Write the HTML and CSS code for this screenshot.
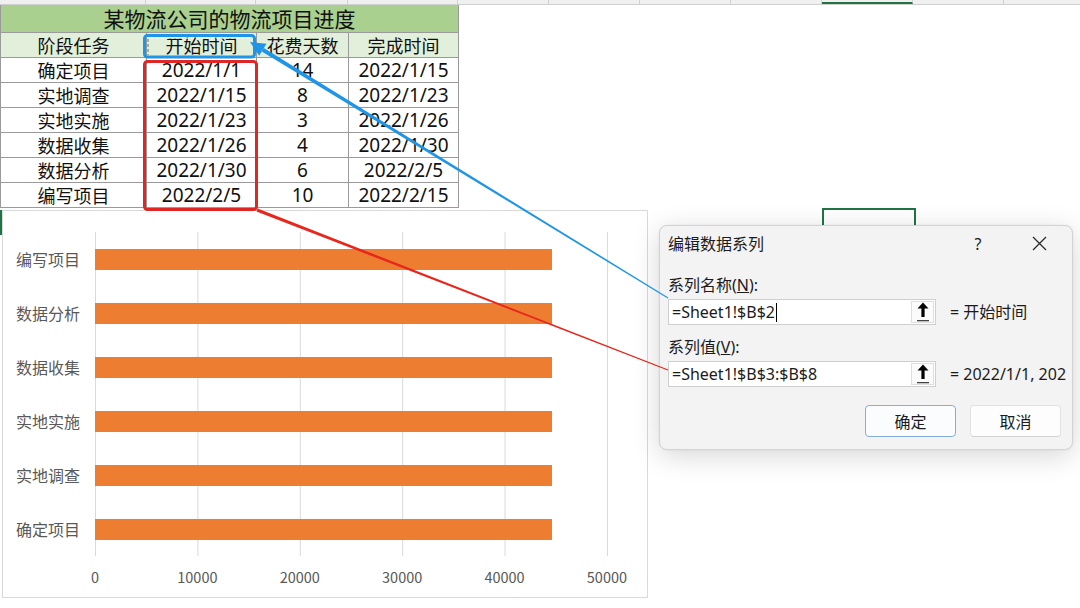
FILE: index.html
```html
<!DOCTYPE html>
<html lang="zh-CN">
<head>
<meta charset="utf-8">
<title>某物流公司的物流项目进度</title>
<link rel="stylesheet" href="styles.css">
</head>
<body>
<div class="sheet">
  <div class="colstrip">
    <span class="c1"></span><span class="c2"></span><span class="c3"></span><span class="c4"></span>
    <span class="cx"></span><span class="cx"></span><span class="cx"></span><span class="cx"></span>
    <span class="cx active"></span><span class="cx"></span><span class="cx last"></span>
  </div>

  <div class="data">
    <div class="title">某物流公司的物流项目进度</div>
    <div class="head">阶段任务</div><div class="head">开始时间</div><div class="head">花费天数</div><div class="head">完成时间</div>
    <div>确定项目</div><div class="num">2022/1/1</div><div class="num">14</div><div class="num">2022/1/15</div>
    <div>实地调查</div><div class="num">2022/1/15</div><div class="num">8</div><div class="num">2022/1/23</div>
    <div>实地实施</div><div class="num">2022/1/23</div><div class="num">3</div><div class="num">2022/1/26</div>
    <div>数据收集</div><div class="num">2022/1/26</div><div class="num">4</div><div class="num">2022/1/30</div>
    <div>数据分析</div><div class="num">2022/1/30</div><div class="num">6</div><div class="num">2022/2/5</div>
    <div>编写项目</div><div class="num">2022/2/5</div><div class="num">10</div><div class="num">2022/2/15</div>
  </div>

  <div class="chart">
    <div class="chart-body">
      <ul class="cats">
        <li>编写项目</li><li>数据分析</li><li>数据收集</li><li>实地实施</li><li>实地调查</li><li>确定项目</li>
      </ul>
      <div class="plot">
        <div class="row"><div class="bar" style="width:89.05%"></div></div>
        <div class="row"><div class="bar" style="width:89.05%"></div></div>
        <div class="row"><div class="bar" style="width:89.05%"></div></div>
        <div class="row"><div class="bar" style="width:89.05%"></div></div>
        <div class="row"><div class="bar" style="width:89.05%"></div></div>
        <div class="row"><div class="bar" style="width:89.05%"></div></div>
      </div>
    </div>
    <div class="axis">
      <span>0</span><span>10000</span><span>20000</span><span>30000</span><span>40000</span><span>50000</span>
    </div>
  </div>
</div>

<!-- selected cells behind the dialog -->
<div class="cell-sel"></div>
<div class="edge-sel"></div>

<div class="dialog">
  <div class="dlg-title">
    <span class="dlg-name">编辑数据系列</span>
    <span class="dlg-help">?</span>
    <span class="dlg-close">
      <svg width="15" height="15" viewBox="0 0 15 15"><path d="M1 1 L14 14 M14 1 L1 14" stroke="#2b2b2b" stroke-width="1.3" fill="none"/></svg>
    </span>
  </div>

  <div class="field-label">系列名称(<u>N</u>):</div>
  <div class="field-row">
    <div class="ref-box">
      <span class="ref-text">=Sheet1!$B$2<i class="caret"></i></span>
      <span class="ref-btn">
        <svg width="12" height="20" viewBox="0 0 12 20"><path d="M6 0.5 L11.5 6.5 L7.6 6.5 L7.6 15 L4.4 15 L4.4 6.5 L0.5 6.5 Z" fill="#000"/><rect x="0" y="18" width="12" height="1.3" fill="#444"/></svg>
      </span>
    </div>
    <span class="ref-value">= 开始时间</span>
  </div>

  <div class="field-label second">系列值(<u>V</u>):</div>
  <div class="field-row">
    <div class="ref-box">
      <span class="ref-text">=Sheet1!$B$3:$B$8</span>
      <span class="ref-btn">
        <svg width="12" height="20" viewBox="0 0 12 20"><path d="M6 0.5 L11.5 6.5 L7.6 6.5 L7.6 15 L4.4 15 L4.4 6.5 L0.5 6.5 Z" fill="#000"/><rect x="0" y="18" width="12" height="1.3" fill="#444"/></svg>
      </span>
    </div>
    <span class="ref-value">= 2022/1/1, 202</span>
  </div>

  <div class="dlg-actions">
    <button class="btn primary">确定</button>
    <button class="btn">取消</button>
  </div>
</div>

<!-- callouts linking the cells to the dialog fields -->
<svg class="marks" width="1080" height="608" viewBox="0 0 1080 608">
  <rect x="144.5" y="35.5" width="110" height="21.5" rx="3" fill="none" stroke="#1f95e8" stroke-width="3"/>
  <path d="M148 39 V55" stroke="#4d7f63" stroke-width="1" stroke-dasharray="3 2" fill="none"/>
  <path d="M151 38.2 H251" stroke="#ffffff" stroke-width="1" stroke-dasharray="3 2" fill="none" opacity="0.8"/>
  <polygon points="261.8,51.5 263.8,48.1 668.3,297.5 667.7,298.5" fill="#1f95e8"/>
  <polygon points="250,42 259.1,55.8 266.5,43.8" fill="#1f95e8"/>

  <rect x="144.5" y="61.5" width="112" height="148" rx="3" fill="none" stroke="#e12626" stroke-width="3"/>
  <polygon points="256.4,211.4 257.6,208.6 668.2,369.5 667.8,370.5" fill="#e8261c"/>
</svg>
</body>
</html>
```

FILE: styles.css
```css
* {
  box-sizing: border-box;
}

html,
body {
  margin: 0;
  padding: 0;
}

body {
  position: relative;
  width: 1080px;
  height: 608px;
  overflow: hidden;
  background: #ffffff;
  color: #111111;
  font-family: "Noto Sans CJK SC", "Noto Sans", sans-serif;
}

/* ---- worksheet ---- */
.colstrip {
  display: flex;
  height: 5px;
  background: #f0f0f0;
  border-bottom: 1px solid #cfcfcf;
}

.colstrip span {
  flex: none;
  height: 4px;
  border-right: 1px solid #d2d2d2;
}

.colstrip .c1 { width: 146px; }
.colstrip .c2 { width: 110px; }
.colstrip .c3 { width: 92px; }
.colstrip .c4 { width: 110px; }
.colstrip .cx { width: 91px; }
.colstrip .last { width: 74px; border-right: 0; }
.colstrip .active { border-bottom: 2px solid #217346; }

.data {
  display: grid;
  grid-template-columns: 146px 110px 92px 110px;
  grid-template-rows: 28px;
  grid-auto-rows: 25px;
  width: 458px;
  border-left: 1px solid #9a9a9a;
}

.data > div {
  display: flex;
  align-items: center;
  justify-content: center;
  border-right: 1px solid #9a9a9a;
  border-bottom: 1px solid #9a9a9a;
  font-size: 18px;
  line-height: 1;
  white-space: nowrap;
}

.data .num {
  font-family: "Noto Sans", "Noto Sans CJK SC", sans-serif;
  font-size: 19px;
  padding-top: 1px;
}

.data .title {
  grid-column: 1 / -1;
  background: #a9d08e;
  font-size: 21px;
}

.data .head {
  background: #e2efda;
}

/* ---- bar chart ---- */
.chart {
  width: 646px;
  height: 388px;
  margin: 2px 0 0 2px;
  padding-top: 21px;
  border: 1px solid #d9d9d9;
  background: #ffffff;
}

.chart-body {
  display: flex;
}

.cats {
  list-style: none;
  margin: 0;
  padding: 0;
  width: 92px;
}

.cats li {
  display: flex;
  align-items: center;
  justify-content: flex-end;
  height: 54px;
  padding-right: 15px;
  font-size: 16px;
  line-height: 1;
  color: #595959;
  white-space: nowrap;
}

.plot {
  width: 513px;
  height: 324px;
  background-image: linear-gradient(to right, #d9d9d9 0, #d9d9d9 1px, transparent 1px);
  background-size: 102.4px 100%;
}

.plot .row {
  display: flex;
  align-items: center;
  height: 54px;
}

.plot .bar {
  height: 21px;
  background: #ed7d31;
}

.axis {
  display: flex;
  margin: 13px 0 0 40.8px;
}

.axis span {
  flex: 0 0 102.4px;
  text-align: center;
  font-size: 14.5px;
  line-height: 16px;
  color: #595959;
}

/* ---- cell selections ---- */
.cell-sel {
  position: absolute;
  left: 822px;
  top: 208px;
  width: 94px;
  height: 30px;
  border: 2px solid #217346;
}

.edge-sel {
  position: absolute;
  left: 0;
  top: 210px;
  width: 2px;
  height: 25px;
  background: #217346;
}

/* ---- dialog ---- */
.dialog {
  position: absolute;
  left: 659px;
  top: 225px;
  width: 414px;
  height: 225px;
  padding: 0 11px 0 8px;
  background: #f3f3f3;
  border: 1px solid #d3d3d3;
  border-radius: 8px;
  box-shadow: 0 6px 28px rgba(0, 0, 0, 0.16), 0 0 2px rgba(0, 0, 0, 0.08);
  overflow: hidden;
  font-family: "Noto Sans", "Noto Sans CJK SC", sans-serif;
  color: #1b1b1b;
  font-size: 16px;
}

.dlg-title {
  display: flex;
  align-items: center;
  height: 35px;
}

.dlg-name {
  flex: 1;
  line-height: 1;
}

.dlg-help {
  width: 44px;
  text-align: center;
  line-height: 1;
}

.dlg-close {
  display: flex;
  align-items: center;
  justify-content: center;
  width: 44px;
  margin-left: 17px;
}

.field-label {
  margin-top: 13px;
  height: 22px;
  line-height: 22px;
  white-space: nowrap;
}

.field-label.second {
  margin-top: 11px;
}

.field-row {
  display: flex;
  align-items: center;
  margin-top: 3px;
  height: 26px;
  white-space: nowrap;
}

.ref-box {
  display: flex;
  flex: none;
  width: 268px;
  height: 26px;
  background: #ffffff;
  border: 1px solid #cfcfcf;
}

.ref-text {
  flex: 1;
  display: flex;
  align-items: center;
  padding-left: 3px;
  line-height: 1;
}

.caret {
  display: inline-block;
  width: 1px;
  height: 19px;
  margin-left: 1px;
  background: #000000;
}

.ref-btn {
  display: flex;
  align-items: center;
  justify-content: center;
  width: 23px;
  margin: 1px;
  background: #fbfbfb;
  border: 1px solid #dedede;
}

.ref-value {
  margin-left: 14px;
  line-height: 1;
}

.dlg-actions {
  display: flex;
  justify-content: flex-end;
  gap: 14px;
  margin-top: 18px;
}

.btn {
  width: 91px;
  height: 32px;
  padding: 0;
  font: inherit;
  color: #1b1b1b;
  background: #fdfdfd;
  border: 1px solid #e2e2e2;
  border-bottom-color: #d2d2d2;
  border-radius: 4px;
}

.btn.primary {
  background: #fbfcfe;
  border: 1px solid #86aedb;
}

/* ---- callout layer ---- */
.marks {
  position: absolute;
  left: 0;
  top: 0;
  pointer-events: none;
}
```
